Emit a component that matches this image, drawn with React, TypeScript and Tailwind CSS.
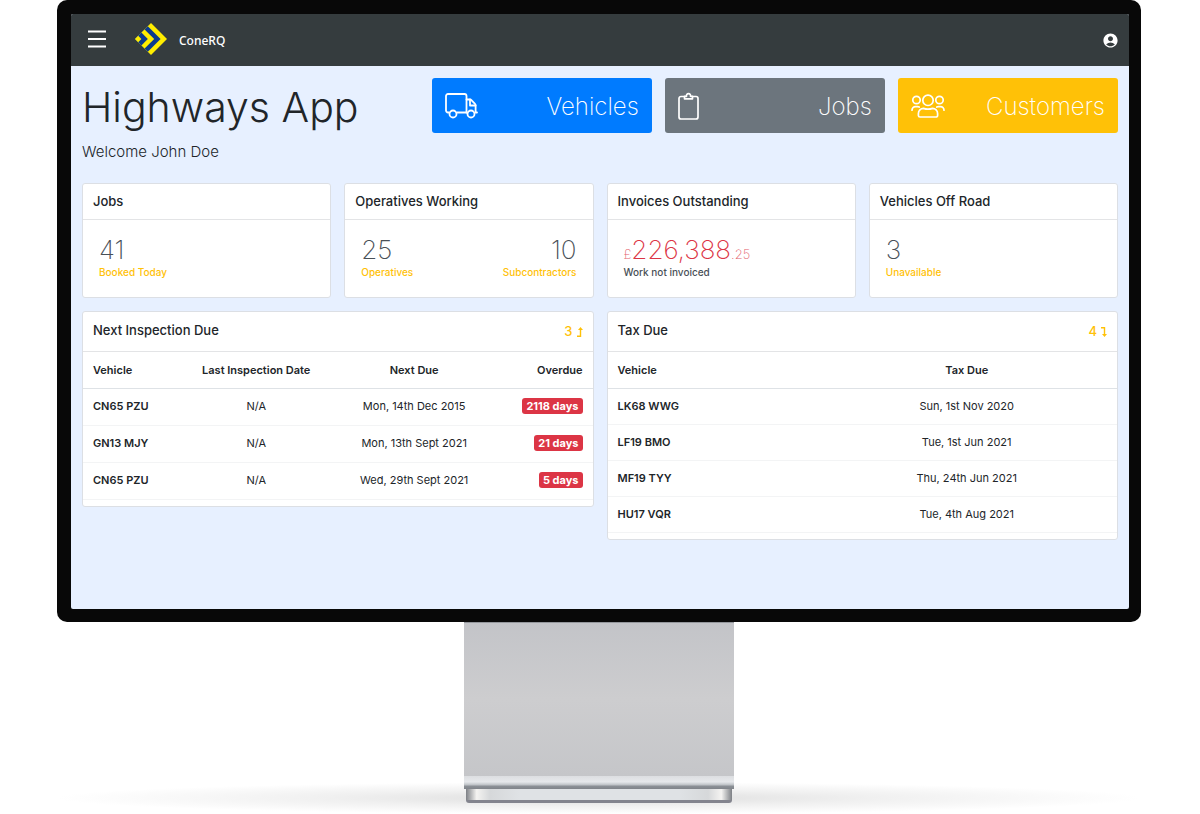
import { MdAccountCircle } from 'react-icons/md'

interface Stat {
  value: React.ReactNode
  label: string
  valueClass?: string
  labelClass?: string
}

const inspections = [
  { id: 1, vehicle: 'CN65 PZU', last: 'N/A', next: 'Mon, 14th Dec 2015', overdue: '2118 days' },
  { id: 2, vehicle: 'GN13 MJY', last: 'N/A', next: 'Mon, 13th Sept 2021', overdue: '21 days' },
  { id: 3, vehicle: 'CN65 PZU', last: 'N/A', next: 'Wed, 29th Sept 2021', overdue: '5 days' }
]

const taxDue = [
  { vehicle: 'LK68 WWG', due: 'Sun, 1st Nov 2020' },
  { vehicle: 'LF19 BMO', due: 'Tue, 1st Jun 2021' },
  { vehicle: 'MF19 TYY', due: 'Thu, 24th Jun 2021' },
  { vehicle: 'HU17 VQR', due: 'Tue, 4th Aug 2021' }
]

// nested diamonds sharing the left corner read as chevrons
function Logo() {
  return (
    <svg width="32" height="32" viewBox="0 0 32 32" aria-hidden="true">
      <path d="M0 16 16 0 32 16 16 32Z" fill="#ffed00" />
      <path d="M0 16 12.8 3.2 25.6 16 12.8 28.8Z" fill="#0b3a8c" />
      <path d="M0 16 9.6 6.4 19.2 16 9.6 25.6Z" fill="#ffed00" />
      <path d="M0 16 6.4 9.6 12.8 16 6.4 22.4Z" fill="#0b3a8c" />
      <path d="M0 16 3.2 12.8 6.4 16 3.2 19.2Z" fill="#ffed00" />
    </svg>
  )
}

function MenuIcon() {
  return (
    <svg width="18" height="18" viewBox="0 0 18 18" stroke="currentColor" strokeWidth="1.8">
      <path d="M0 1.500h18M0 9h18M0 16.500h18" />
    </svg>
  )
}

function TruckIcon() {
  return (
    <svg width="33" height="27" viewBox="0 0 33 27" fill="none" stroke="currentColor" strokeWidth="1.8" strokeLinejoin="round" strokeLinecap="round">
      <path d="M4 20.500H3a2 2 0 0 1-2-2V4a2 2 0 0 1 2-2h16.500a2 2 0 0 1 2 2v16.500" />
      <path d="M12 20.500h10" />
      <path d="M21.500 7.500h3.500a2 2 0 0 1 1.400.6l3.600 3.800a2 2 0 0 1 .6 1.400v7.200h1.400" />
      <path d="M25 7.500v6h5.600" />
      <circle cx="8" cy="22" r="3.500" fill="#007bff" />
      <circle cx="26" cy="22" r="3.500" fill="#007bff" />
    </svg>
  )
}

function ClipboardIcon() {
  return (
    <svg width="21" height="28" viewBox="0 0 21 28" fill="none" stroke="currentColor" strokeWidth="1.7" strokeLinejoin="round">
      <path d="M7 4.500H3a2 2 0 0 0-2 2V25a2 2 0 0 0 2 2h15a2 2 0 0 0 2-2V6.500a2 2 0 0 0-2-2h-4" />
      <path d="M6.500 6.800V4.300h2a2.100 2.100 0 1 1 4 0h2v2.500Z" />
    </svg>
  )
}

function CustomersIcon() {
  return (
    <svg width="34" height="24" viewBox="0 0 34 24" fill="none" stroke="currentColor" strokeWidth="1.7" strokeLinejoin="round" strokeLinecap="round">
      <circle cx="17" cy="6.300" r="5.200" />
      <circle cx="5.500" cy="6" r="3.700" />
      <circle cx="28.500" cy="6" r="3.700" />
      <path d="M9 23a1.600 1.600 0 0 1-1.600-1.600v-2a5 5 0 0 1 5-5q4.600 1.600 9.200 0a5 5 0 0 1 5 5v2a1.600 1.600 0 0 1-1.600 1.600Z" />
      <path d="M1 16.200a3.600 3.600 0 0 1 3.600-3.600h2a3.600 3.600 0 0 1 1.600.4" />
      <path d="M33 16.200a3.600 3.600 0 0 0-3.600-3.600h-2a3.600 3.600 0 0 0-1.600.4" />
    </svg>
  )
}

function TurnArrow({ down = false }: { down?: boolean }) {
  return (
    <svg width="6" height="10" viewBox="0 0 6 10" fill="none" stroke="currentColor" className={down ? '-scale-y-100' : ''}>
      <path d="M0 9.300h3.500V2" strokeWidth="1.400" />
      <path d="M3.500 0 6 3H1Z" fill="currentColor" stroke="none" />
    </svg>
  )
}

function AppBar() {
  return (
    <header className="flex h-13 items-center bg-[#353c3e] pr-[10px] pl-[17px] text-white">
      <button type="button" aria-label="Open menu" className="pb-0.5">
        <MenuIcon />
      </button>
      <a href="#home" className="ml-[29px] flex items-center gap-3">
        <div className="pb-0.5">
          <Logo />
        </div>
        <span className="pt-px font-['Noto_Sans',sans-serif] text-xs font-medium">ConeRQ</span>
      </a>
      <button type="button" aria-label="Account" className="ml-auto">
        <MdAccountCircle size={17} />
      </button>
    </header>
  )
}

function ActionButton({ label, icon, color }: { label: string; icon: React.ReactNode; color: string }) {
  return (
    <button type="button" className={`flex h-[55px] items-center justify-between rounded-[3px] px-[13px] text-2xl font-extralight text-white ${color}`}>
      {icon}
      <span className="pt-0.5">{label}</span>
    </button>
  )
}

function StatCard({ title, stats }: { title: string; stats: Stat[] }) {
  return (
    <section className="rounded-[3px] border border-[#dcdfe4] bg-white">
      <h2 className="border-b border-[#e3e4e6] px-[10px] py-2 text-[13px] leading-[19px] font-medium">{title}</h2>
      <div className="flex justify-between p-4">
        {stats.map((stat) => (
          <div key={stat.label} className="last:not-first:text-right">
            <p className={`text-[26px] leading-7 font-extralight ${stat.valueClass ?? 'text-[#495057]'}`}>{stat.value}</p>
            <p className={`text-[10px] leading-[17px] font-medium ${stat.labelClass ?? 'text-[#ffc107]'}`}>{stat.label}</p>
          </div>
        ))}
      </div>
    </section>
  )
}

function TableCard({ title, count, down, children }: { title: string; count: number; down?: boolean; children: React.ReactNode }) {
  return (
    <section className="rounded-[3px] border border-[#dcdfe4] bg-white pb-[6px]">
      <div className="flex h-10 items-center justify-between border-b border-[#e3e4e6] px-[10px]">
        <h2 className="pb-1 text-[13px] leading-5 font-medium">{title}</h2>
        <a href="#all" className="flex items-center gap-1 text-[13px] font-medium text-[#ffc107]">
          {count}
          <TurnArrow down={down} />
        </a>
      </div>
      {children}
    </section>
  )
}

export default function App() {
  return (
    <div className="overflow-hidden bg-white pr-[59px] pb-[11px] pl-[57px] font-[Inter,sans-serif] text-[#212529]">
      <div className="rounded-[10px] bg-[#080808] pt-[14px] pr-3 pb-[13px] pl-[14px]">
        <div className="min-h-[595px] overflow-hidden rounded-[2px] bg-[#e7f0ff]">
          <AppBar />
          <main className="px-[11px] pt-3">
            <div className="grid grid-cols-3 gap-[13px]">
              <div>
                <h1 className="text-[41px] leading-[58px] font-light">Highways App</h1>
                <p className="mt-1 text-[15px] leading-6 font-light">Welcome John Doe</p>
              </div>
              <div className="col-span-2 grid grid-cols-3 items-start gap-[13px]">
                <ActionButton label="Vehicles" icon={<TruckIcon />} color="bg-[#007bff]" />
                <ActionButton label="Jobs" icon={<ClipboardIcon />} color="bg-[#6c757d]" />
                <ActionButton label="Customers" icon={<CustomersIcon />} color="bg-[#ffc107]" />
              </div>
            </div>

            <div className="mt-[19px] grid grid-cols-4 gap-[13px]">
              <StatCard title="Jobs" stats={[{ value: '41', label: 'Booked Today' }]} />
              <StatCard
                title="Operatives Working"
                stats={[
                  { value: '25', label: 'Operatives' },
                  { value: '10', label: 'Subcontractors' }
                ]}
              />
              <StatCard
                title="Invoices Outstanding"
                stats={[
                  {
                    value: (
                      <>
                        <small className="text-[13px] leading-none opacity-80">£</small>
                        226,388
                        <small className="text-[13px] leading-none opacity-80">.25</small>
                      </>
                    ),
                    label: 'Work not invoiced',
                    valueClass: 'text-[#dc3545]',
                    labelClass: 'text-[#495057]'
                  }
                ]}
              />
              <StatCard title="Vehicles Off Road" stats={[{ value: '3', label: 'Unavailable' }]} />
            </div>

            <div className="mt-[13px] grid grid-cols-2 items-start gap-[13px]">
              <TableCard title="Next Inspection Due" count={3}>
                <table className="w-full text-center text-[11px]">
                  <thead>
                    <tr className="h-9 border-b border-[#dee2e6]">
                      <th className="w-[19%] pl-[10px] text-left font-semibold">Vehicle</th>
                      <th className="w-[30%] font-semibold">Last Inspection Date</th>
                      <th className="w-[32%] font-semibold">Next Due</th>
                      <th className="pr-[10px] text-right font-semibold">Overdue</th>
                    </tr>
                  </thead>
                  <tbody>
                    {inspections.map((row) => (
                      <tr key={row.id} className="h-[37px] border-b border-[#f3f4f5]">
                        <th className="pl-[10px] text-left font-semibold">{row.vehicle}</th>
                        <td>{row.last}</td>
                        <td>{row.next}</td>
                        <td className="pr-[10px] text-right">
                          <span className="inline-block rounded-[3px] bg-[#dc3545] px-1 leading-4 font-bold text-white">{row.overdue}</span>
                        </td>
                      </tr>
                    ))}
                  </tbody>
                </table>
              </TableCard>

              <TableCard title="Tax Due" count={4} down>
                <table className="w-full text-center text-[11px]">
                  <thead>
                    <tr className="h-9 border-b border-[#dee2e6]">
                      <th className="w-[41%] pl-[10px] text-left font-semibold">Vehicle</th>
                      <th className="font-semibold">Tax Due</th>
                    </tr>
                  </thead>
                  <tbody>
                    {taxDue.map((row) => (
                      <tr key={row.vehicle} className="h-9 border-b border-[#f3f4f5]">
                        <th className="pl-[10px] text-left font-semibold">{row.vehicle}</th>
                        <td>{row.due}</td>
                      </tr>
                    ))}
                  </tbody>
                </table>
              </TableCard>
            </div>
          </main>
        </div>
      </div>

      {/* monitor stand */}
      <div className="relative flex flex-col items-center">
        <div className="absolute inset-x-0 top-[160px] h-8 bg-[radial-gradient(closest-side,#dcdcdc,#f0f0f0_50%,transparent)]" />
        <div className="relative h-[154px] w-[270px] border-t border-[#94979c] bg-linear-to-b from-[#c3c4c8] via-[#cdcdcf] to-[#c5c6c9]" />
        <div className="relative h-[13px] w-[270px] bg-[linear-gradient(#dcdee1,#e6e8eb_45%,#c4c8cc_65%,#8a8f95_80%,#80848a)]" />
        <div className="relative h-[14px] w-[266px] rounded-b-[3px] border-b-[3px] border-[#83848e] bg-[linear-gradient(90deg,#7d8085,#f4f3f1_4%,#d6d8da_9%,#dfe2e5_20%,#dfe2e5_80%,#d6d8da_91%,#f4f3f1_96%,#7d8085)]" />
      </div>
    </div>
  )
}
